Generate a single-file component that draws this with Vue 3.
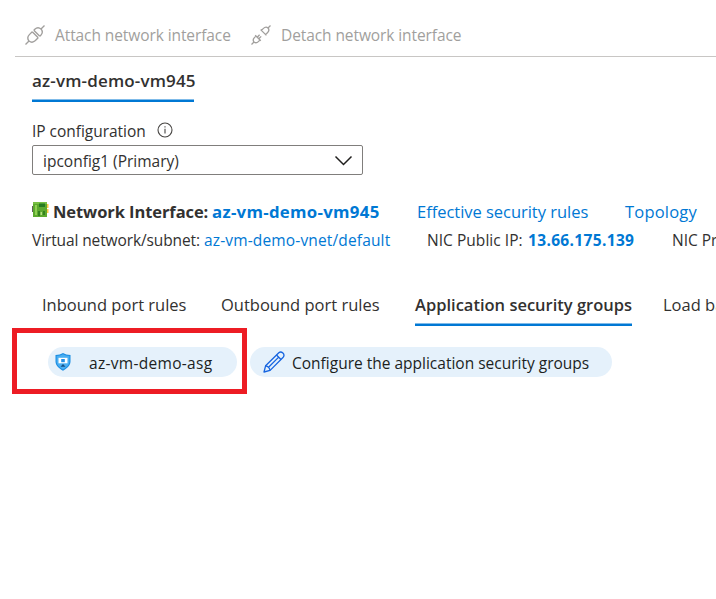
<script setup>
const chevron = 'M1.5 1.5 9.5 9.5 17.5 1.5'
</script>

<template>
  <main class="page">
    <header class="toolbar">
      <svg class="plug" viewBox="0 0 20 20" fill="none" stroke="#a19f9d" stroke-width="1.35">
        <path d="M.5 19.5 4 16M16 4 19.5.5" />
        <path d="M7.2 6.8 13.2 12.8M8.8 5.2 14.8 11.2" />
        <path d="M7.2 6.8 4.4 9.6C2.6 11.5 2.4 14 4 16 6 17.6 8.5 17.4 10.4 15.6L13.2 12.8" />
        <path d="M8.8 5.2 9.8 4.2C11.7 2.4 14.2 2.4 16 4 17.6 5.8 17.6 8.3 15.8 10.2L14.8 11.2" />
      </svg>
      <span class="attach">Attach network interface</span>
      <svg class="plug" viewBox="0 0 20 20" fill="none" stroke="#a19f9d" stroke-width="1.3">
        <path d="M.5 19.5 3 17M17 3 19.5.5" />
        <path d="M4.2 10.2 9.8 15.8M5 11 3.6 12.4C2 14 1.8 15.6 3 17 4.4 18.2 6 18 7.6 16.4L9 15" />
        <path d="M9.6 4.6 15.4 10.4M10.4 5.4 12.2 3.6C13.9 1.9 15.6 1.7 17 3 18.3 4.4 18.1 6.1 16.4 7.8L14.6 9.6" />
        <path d="M6.2 12.2 8.6 9.8M7.8 13.8 10.2 11.4" />
      </svg>
      <span class="detach">Detach network interface</span>
    </header>

    <nav class="nic-tabs"><span class="nic-tab">az-vm-demo-vm945</span></nav>

    <section class="config">
      <div class="label">
        <span class="label-text">IP configuration</span>
        <svg class="info" viewBox="0 0 16 16" fill="none" stroke="#484644">
          <circle cx="8" cy="8" r="7" stroke-width="1.1" />
          <path d="M8 6.8V11.5M8 4.3V5.5" stroke-width="1.1" />
        </svg>
      </div>
      <div class="select">
        <span class="select-text">ipconfig1 (Primary)</span>
        <svg class="chevron" viewBox="0 0 19 11" fill="none" stroke="#201f1e" stroke-width="1.5"><path :d="chevron" /></svg>
      </div>
    </section>

    <section class="details">
      <div class="row title">
        <svg class="card" viewBox="0 0 18 18">
          <path d="M0 5H2V11H0Z" fill="#605e5c" />
          <path d="M14 3H16.500V7H14ZM14 8H16.500V12H14Z" fill="#ffc83d" />
          <path d="M1 1H15V16H1Z" fill="#5da92f" />
          <path d="M1 1H15V3H1Z" fill="#78bf43" />
          <path d="M3 4H5V14H3Z" fill="#8ed052" />
          <path d="M7 2.500H13V6H7Z" fill="#277b20" />
          <path d="M6 10H8V15H6ZM11 10H13V14H11Z" fill="#34821f" />
          <path d="M8.500 11H10V14H8.500Z" fill="#b4e083" />
        </svg>
        <strong class="ni">Network Interface:</strong>
        <a class="ni-name">az-vm-demo-vm945</a>
        <a class="rules">Effective security rules</a>
        <a class="topology">Topology</a>
      </div>
      <div class="row meta">
        <span class="vnet">Virtual network/subnet:</span>
        <a class="vnet-name">az-vm-demo-vnet/default</a>
        <span class="public">NIC Public IP:</span>
        <a class="ip">13.66.175.139</a>
        <span class="private">NIC Private IP:</span>
      </div>
    </section>

    <nav class="tabs">
      <span class="inbound">Inbound port rules</span>
      <span class="outbound">Outbound port rules</span>
      <span class="active">Application security groups</span>
      <span class="load">Load balancing</span>
    </nav>

    <section class="groups">
      <div class="highlight">
        <div class="pill asg">
          <svg class="shield" viewBox="0 0 16 18">
            <path d="M8 0C10 1.4 12.5 1.8 15.5 2V8.5C15.5 13 11.5 15.6 8 17.8 4.5 15.6.5 13 .5 8.5V2C3.500 1.800 6 1.400 8 0Z" fill="#1b8de2" />
            <path d="M8 1.300C10 2.500 12 2.800 14.400 3V8.500C14.400 12.200 11 14.600 8 16.500 5 14.600 1.600 12.200 1.600 8.500V3C4 2.800 6 2.500 8 1.300Z" fill="#48aef2" />
            <path d="M3.500 4.800H12.500V10.300H3.500Z" fill="#fff" />
            <path d="M6.200 6H9.800V9.200H6.200Z" fill="#2490e6" />
            <path d="M8 11 10.500 13.700H5.500Z" fill="#174f83" />
          </svg>
          <span class="asg-name">az-vm-demo-asg</span>
        </div>
      </div>
      <div class="pill configure">
        <svg class="pencil" viewBox="0 0 22 22" fill="none" stroke="#1664e0" stroke-width="1.3" stroke-linejoin="round">
          <path d="M1 21 2.600 14.800 15.800 1.700C18.500-.4 22.500 3.300 20.200 6.200L7.100 19.400Z" />
          <path d="M2.600 14.800C4.900 15.200 6.600 16.900 7.100 19.400M13.500 4 18 8.500M5.300 16.500 15.700 6.100" />
        </svg>
        <span class="configure-text">Configure the application security groups</span>
      </div>
    </section>
  </main>
</template>

<style>
body { background: #fff; }
</style>

<style scoped>
.page { box-sizing: border-box; width: 716px; height: 599px; overflow: hidden; background: #fff; color: #323130; font: 15.5px/20px "Open Sans", sans-serif; white-space: nowrap; }
.page span, .page a, .page strong, .page svg { flex: none; }
a { color: #0078d4; }
.toolbar { display: flex; align-items: center; box-sizing: border-box; height: 57px; margin-left: 15px; padding: 13px 0 0 10px; border-bottom: 1px solid #c8c6c4; color: #a19f9d; letter-spacing: -.09px; }
.plug { width: 20px; height: 20px; }
.attach { width: 196px; margin-left: 10px; }
.detach { margin-left: 10px; }
.nic-tabs { display: flex; height: 45px; padding-left: 32px; }
.nic-tab { box-sizing: border-box; width: 162px; padding-top: 14px; box-shadow: inset 0 -2px #0078d4, inset 0 -3px #7fbbe9; font-size: 17px; font-weight: 550; letter-spacing: .16px; }
.config { padding: 18px 0 0 32px; }
.label { display: flex; align-items: center; height: 20px; }
.label-text { width: 125px; padding-top: 1px; letter-spacing: -.03px; }
.info { width: 16px; height: 16px; }
.select { display: flex; align-items: center; justify-content: space-between; box-sizing: border-box; width: 331px; height: 30px; margin-top: 5px; padding: 0 9px 0 10px; border: 1px solid #807e7c; border-radius: 2px; }
.select-text { padding-top: 2px; }
.chevron { width: 19px; height: 11px; }
.details { padding: 26px 0 0 32px; }
.row { display: flex; align-items: center; }
.title { height: 22px; font-size: 16.5px; }
.card { width: 18px; height: 18px; margin-top: -4px; }
.ni { width: 159px; margin-left: 3px; font-weight: 700; letter-spacing: -.08px; }
.ni-name { width: 205px; font-size: 16.800px; font-weight: 700; letter-spacing: .3px; }
.rules { width: 208px; letter-spacing: -.03px; }
.topology { letter-spacing: .2px; }
.meta { height: 20px; margin-top: 7px; }
.vnet { width: 172px; letter-spacing: -.11px; }
.vnet-name { width: 223px; letter-spacing: .15px; }
.public { width: 101px; letter-spacing: .04px; }
.ip { width: 144px; font-weight: 700; letter-spacing: .34px; }
.tabs { display: flex; height: 76px; box-sizing: border-box; padding: 45px 0 0 42px; font-size: 16.5px; }
.inbound { width: 179px; }
.outbound { width: 194px; }
.active { box-sizing: border-box; width: 217px; height: 31px; box-shadow: inset 0 -2px #0078d4, inset 0 -3px #7fbbe9; font-weight: 600; }
.load { margin-left: 31px; }
.groups { display: flex; align-items: flex-start; padding: 2px 0 0 12px; }
.highlight { box-sizing: border-box; width: 235px; height: 66px; padding: 14px 0 0 31px; border: 5px solid #ed1c24; }
.pill { display: flex; align-items: center; box-sizing: border-box; height: 30px; border-radius: 15px; background: #e5f1fb; color: #201f1e; }
.asg { width: 189px; padding-left: 7px; }
.shield { width: 16px; height: 18px; }
.asg-name { margin-left: 18px; padding-top: 2px; letter-spacing: .3px; }
.configure { width: 362px; margin: 19px 0 0 3px; padding-left: 13px; }
.pencil { width: 22px; height: 22px; }
.configure-text { margin-left: 7px; padding-top: 2px; }
</style>
